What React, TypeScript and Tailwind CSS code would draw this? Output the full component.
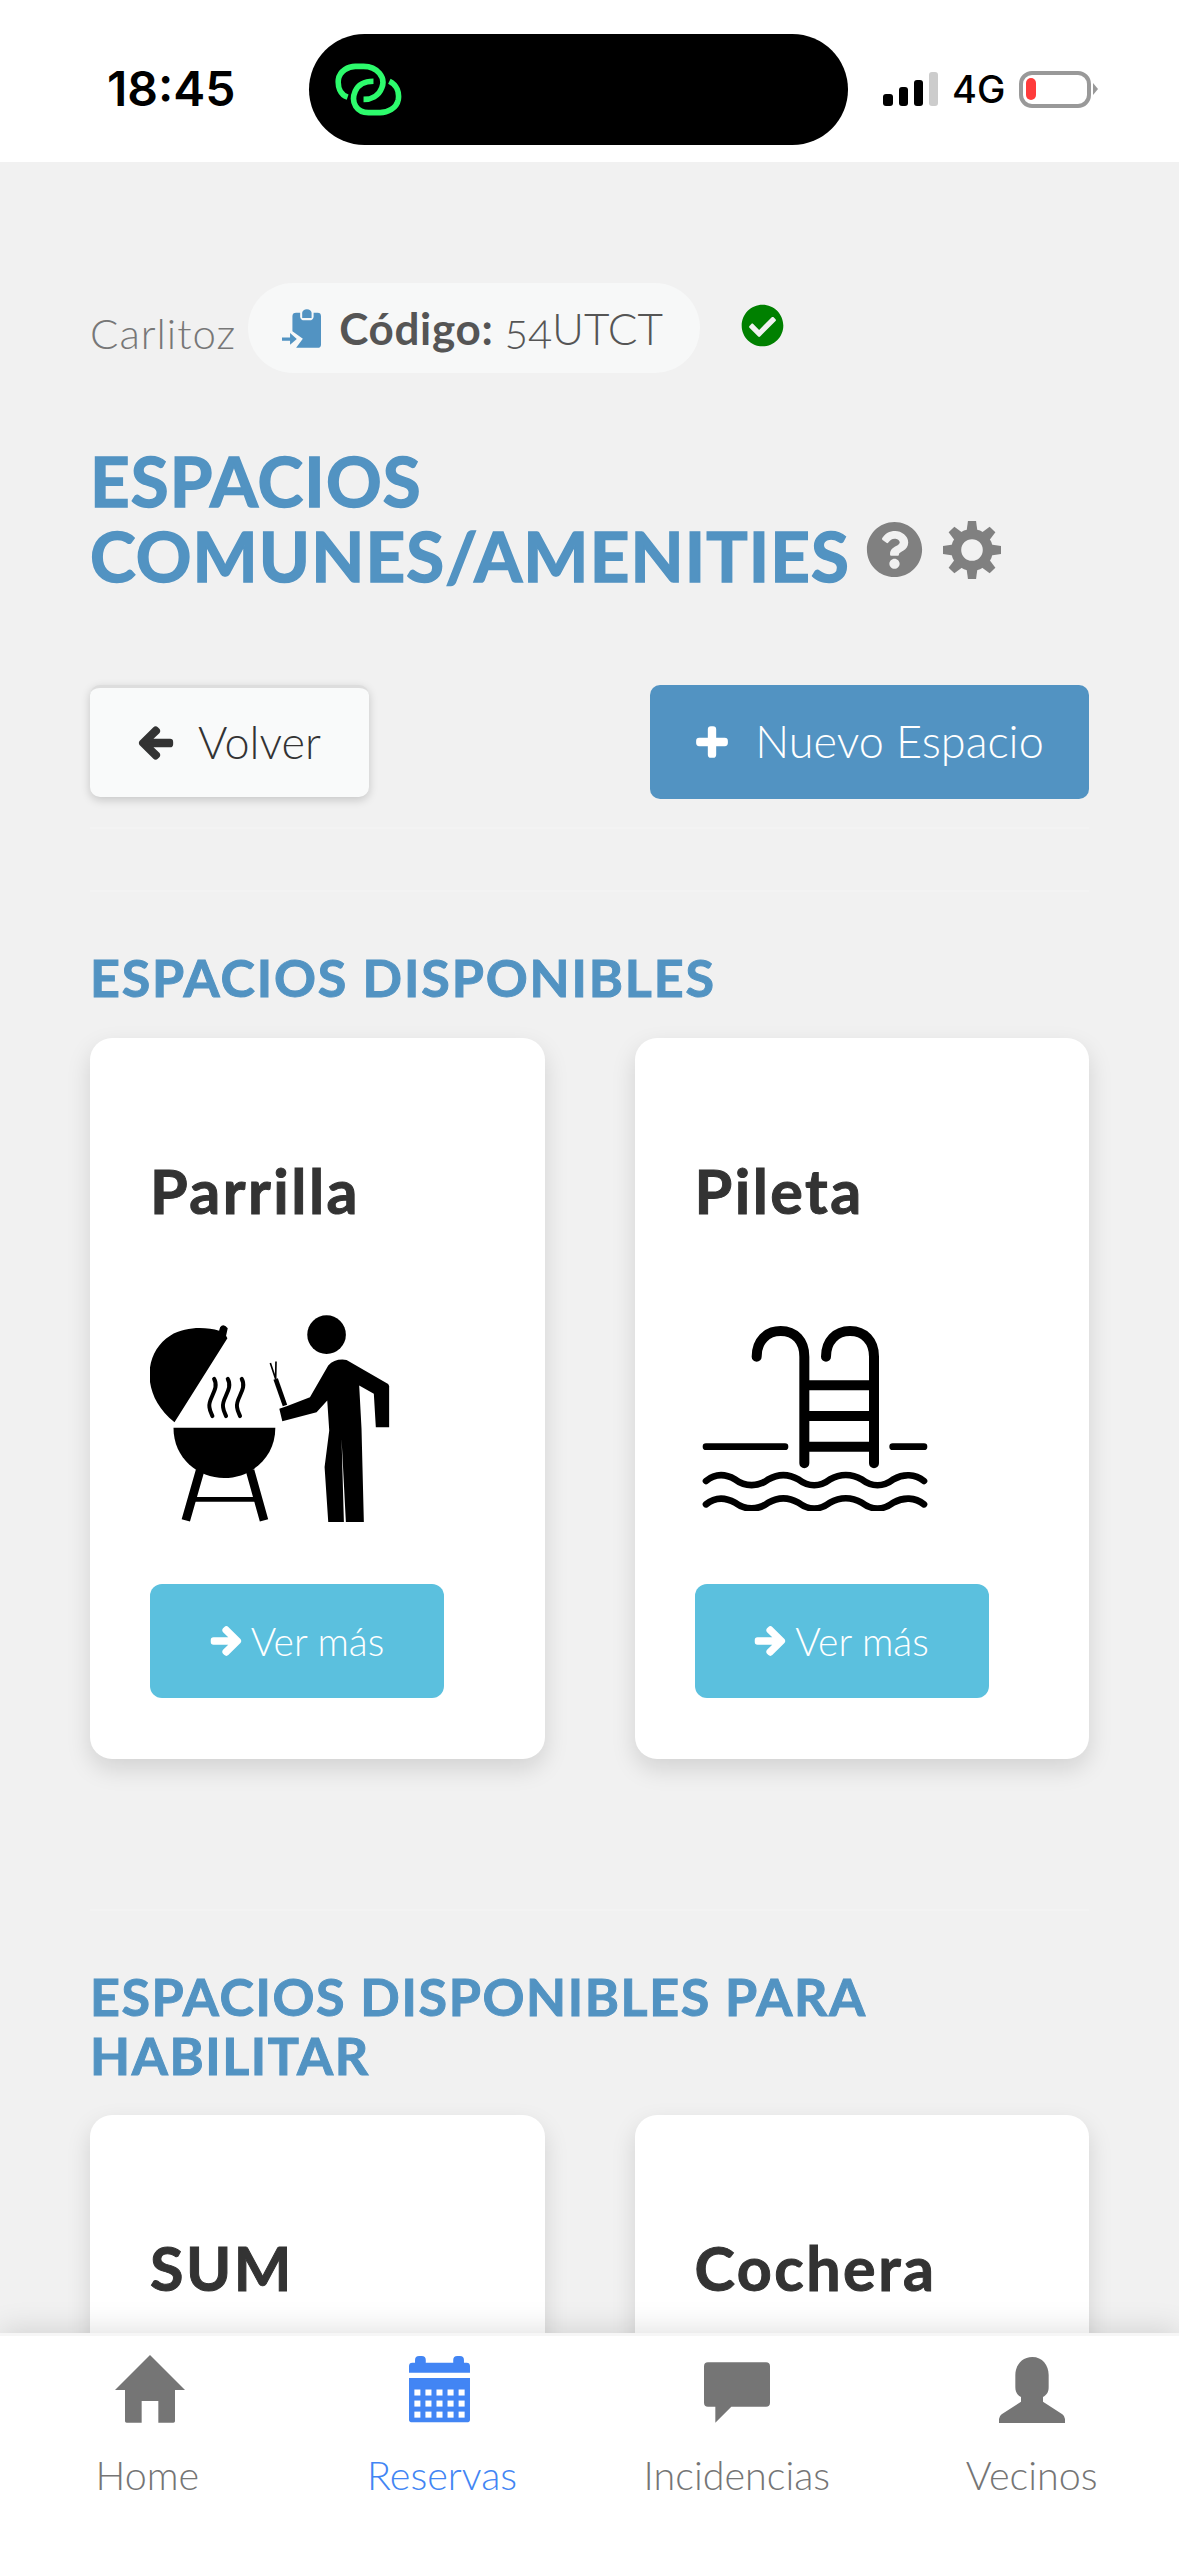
import React from "react";
import {
  FaArrowLeft,
  FaArrowRight,
  FaCheckCircle,
  FaPlus,
  FaQuestionCircle,
} from "react-icons/fa";

const GrillIcon = () => (
  <svg width={240} height={207} viewBox="90 108 720 622" fill="#000">
    <path d="M163 430C60 350 70 220 150 170C200 140 260 145 297 155L300 145Q310 132 323 148L318 170L322 178Z" />
    <path d="M160 447H466C466 540 390 598 312 598C235 598 160 540 160 447Z" />
    <path d="M240 575L197 725M390 575L432 725" stroke="#000" strokeWidth={26} />
    <path d="M222 662H408" stroke="#000" strokeWidth={14} />
    {[0, 41, 83].map((x) => (
      <path
        key={x}
        transform={`translate(${x} 0)`}
        d="M282 300C300 330 262 360 268 385C270 400 275 405 277 412"
        fill="none"
        stroke="#000"
        strokeWidth={12}
        strokeLinecap="round"
      />
    ))}
    <circle cx={620} cy={167} r={58} />
    <path d="M478 390L500 382L570 355L625 260Q645 238 680 243L805 315Q810 320 808 330V445H768L762 345L718 320L725 450L732 730H678L665 480L672 730H625L614 565L628 455L622 365L590 400L487 427Z" />
    <path d="M495 380L467 300" stroke="#000" strokeWidth={14} />
    <path d="M467 300L451 252M467 300L468 248" stroke="#000" strokeWidth={5} fill="none" />
  </svg>
);

const PoolIcon = () => (
  <svg width={226} height={185} viewBox="97 105 676 555" fill="none" stroke="#000" strokeLinecap="round">
    <path
      strokeWidth={30}
      d="M260 197C260 150 290 120 332 120C375 120 403 150 403 197V517M468 197C468 150 498 120 540 120C583 120 612 150 612 197V517"
    />
    <path strokeWidth={30} strokeLinecap="butt" d="M403 283H612M403 375H612M403 467H612" />
    <path strokeWidth={20} d="M108 467H345M668 467H762" />
    {[0, 70].map((y) => (
      <path
        key={y}
        transform={`translate(0 ${y})`}
        strokeWidth={20}
        d="M108 570C135 548 165 548 195 565C225 588 265 588 295 565C325 548 355 548 385 565C415 588 450 588 480 565C510 548 545 548 575 565C605 588 640 588 670 565C700 548 735 548 762 570"
      />
    ))}
  </svg>
);

const GearIcon = () => (
  <svg width={58} height={58} viewBox="0 0 172 172" fill="#808080">
    <circle cx={86} cy={86} r={47} fill="none" stroke="#808080" strokeWidth={30} />
    {[0, 45, 90, 135, 180, 225, 270, 315].map((a) => (
      <path key={a} transform={`rotate(${a} 86 86)`} d="M70 30L74 0H98L102 30Z" />
    ))}
  </svg>
);

const LinkLogo = () => (
  <svg width={67} height={53} viewBox="105 95 200 160" fill="none" stroke="#2dfb6c" strokeWidth={17}>
    <path d="M142 198C118 190 112 165 114 145C118 118 145 105 165 105H190C232 105 258 140 245 170C236 195 212 205 190 205" />
    <path d="M268 150C292 162 298 185 295 205C290 232 262 245 240 245H205C170 245 150 215 165 180C175 157 195 150 220 150" />
  </svg>
);

const ClipboardIcon = () => (
  <svg width={39} height={39} viewBox="66 92 116 115" fill="#5293c2" className="shrink-0">
    <path d="M108 103H120V115Q122 125 132 125H148Q158 125 160 115V103H172Q182 103 182 113V197Q182 207 172 207H108L128 180L97 158V113Q97 103 108 103Z" />
    <path d="M126 103Q128 92 140 92Q152 92 154 103V118H126Z" />
    <path d="M66 176H90V163L110 181L90 198V186H66Z" />
  </svg>
);

const HomeIcon = () => (
  <svg width={70} height={68} viewBox="75 45 210 204" fill="#757575" className="ml-[6px]">
    <path d="M180 45L285 150H255V244Q255 248 250 248H205V183H155V248H110Q105 248 105 244V150H75Z" />
  </svg>
);

const CalendarIcon = () => (
  <svg width={61} height={67} viewBox="0 0 182 200" fill="#4285f4" className="mr-[5px]">
    <path d="M0 50V30Q0 20 10 20H18V12Q18 0 30 0H38Q50 0 50 12V20H132V12Q132 0 144 0H152Q164 0 164 12V20H172Q182 20 182 30V50Z" />
    <path d="M0 66H182V190Q182 198 172 198H10Q0 198 0 190Z" />
    {[100, 133, 166].map((y) =>
      [16, 49, 82, 115, 148].map((x) => (
        <rect key={`${x}-${y}`} x={x} y={y} width={18} height={18} fill="#fff" />
      )),
    )}
  </svg>
);

const ChatIcon = () => (
  <svg width={66} height={61} viewBox="0 0 198 182" fill="#757575">
    <path d="M12 0H186Q198 0 198 12V122Q198 134 186 134H82L34 182V134H12Q0 134 0 122V12Q0 0 12 0Z" />
  </svg>
);

const UserIcon = () => (
  <svg width={66} height={66} viewBox="0 0 198 198" fill="#757575">
    <path d="M100 0C130 0 149 24 149 54V90C149 106 143 114 132 120V134L190 172Q198 178 198 186V198H0V186Q0 178 8 172L66 134V120C55 114 49 106 49 90V54C49 24 70 0 100 0Z" />
  </svg>
);

const SpaceCard = ({
  title,
  icon,
}: {
  title: string;
  icon?: React.ReactNode;
}) => (
  <div className="h-[721px] rounded-[22px] bg-white pl-[60px] pt-[117px] shadow-[0_10px_24px_rgba(0,0,0,0.13)]">
    <h3 className="text-[61px] leading-[72px] font-bold tracking-[2.5px] text-[#333] [-webkit-text-stroke:1px_#333]">
      {title}
    </h3>
    {icon && (
      <>
        <div className="mt-[76px] flex h-[230px] w-[240px] items-center justify-center">
          {icon}
        </div>
        <button className="mt-[51px] flex h-[114px] w-[294px] items-center justify-center gap-[9px] rounded-[12px] bg-[#5bc0de] text-[39px] font-light text-white">
          <FaArrowRight className="h-[32px] w-[32px]" stroke="currentColor" strokeWidth={40} />
          Ver más
        </button>
      </>
    )}
  </div>
);

const NavItem = ({
  icon,
  label,
  active,
}: {
  icon: React.ReactNode;
  label: string;
  active?: boolean;
}) => (
  <div className="flex flex-col items-center">
    <div className="flex h-[68px] items-end">{icon}</div>
    <span
      className={`mt-[30px] text-[39.5px] leading-[44px] font-light ${
        active ? "text-[#4285f4]" : "text-[#757575]"
      }`}
    >
      {label}
    </span>
  </div>
);

const App = () => {
  return (
    <div className="flex h-[2556px] w-[1179px] flex-col overflow-hidden bg-[#f1f1f1] font-['Lato',sans-serif]">
      {/* status bar */}
      <div className="flex h-[162px] shrink-0 items-center bg-white pt-[16px] font-['Inter',sans-serif]">
        <span className="ml-[107px] w-[202px] text-[48px] font-semibold text-black">
          18:45
        </span>
        <div className="flex h-[111px] w-[539px] items-center rounded-[56px] bg-black pl-[26px]">
          <LinkLogo />
        </div>
        <div className="ml-[35px] flex h-[34px] items-end gap-[6px]">
          <div className="h-[12px] w-[10px] rounded-[3px] bg-black" />
          <div className="h-[19px] w-[9px] rounded-[3px] bg-black" />
          <div className="h-[26px] w-[9px] rounded-[3px] bg-black" />
          <div className="h-[34px] w-[9px] rounded-[3px] bg-[#ccc]" />
        </div>
        <span className="ml-[14px] text-[38px] font-medium text-black">4G</span>
        <div className="ml-[14px] flex h-[37px] w-[72px] items-center rounded-[13px] border-[4px] border-[#999] pl-[3px]">
          <div className="h-[22px] w-[10px] rounded-[5px] bg-[#ff3b3b]" />
        </div>
        <div className="ml-[2px] h-0 w-0 border-y-[6px] border-l-[5px] border-y-transparent border-l-[#999]" />
      </div>

      {/* content */}
      <div className="min-h-0 flex-1 overflow-hidden px-[90px] pt-[121px]">
        <div className="flex h-[90px] items-center">
          <span className="mt-[10px] text-[42px] font-light tracking-[1px] text-[#777]">
            Carlitoz
          </span>
          <div className="ml-[12px] flex h-[90px] w-[452px] shrink-0 items-center rounded-full bg-[#f7f8f8] pl-[34px]">
            <ClipboardIcon />
            <span className="ml-[18px] text-[44px] font-bold tracking-[0.7px] text-[#555]">
              Código:
            </span>
            <span className="ml-[11px] text-[44px] font-light text-[#555] [font-variant-numeric:oldstyle-nums]">
              54UTCT
            </span>
          </div>
          <FaCheckCircle className="ml-[41px] h-[43px] w-[43px] -translate-y-[3px] text-[#008000]" />
        </div>

        <h1 className="mt-[70px] text-[69px] leading-[75px] font-bold tracking-[1.1px] text-[#5293c2] [-webkit-text-stroke:1.5px_#5293c2]">
          ESPACIOS
          <br />
          COMUNES/AMENITIES
        </h1>
        <div className="-mt-[72px] ml-[776px] flex gap-[20px]">
          <FaQuestionCircle className="h-[57px] w-[57px] text-[#808080]" />
          <GearIcon />
        </div>

        <div className="mt-[106px] flex items-start justify-between">
          <button className="flex h-[112px] w-[279px] items-center justify-center gap-[24px] rounded-[10px] border-t-[3px] border-[#ddd] bg-[#f9fafa] text-[45px] font-light text-[#333] shadow-[0_3px_10px_rgba(0,0,0,0.18)]">
            <FaArrowLeft className="h-[36px] w-[36px]" stroke="currentColor" strokeWidth={40} />
            Volver
          </button>
          <button className="flex h-[114px] w-[439px] items-center justify-center gap-[26px] rounded-[10px] bg-[#5293c2] text-[45px] font-light text-white">
            <FaPlus className="h-[34px] w-[34px]" stroke="currentColor" strokeWidth={30} />
            Nuevo Espacio
          </button>
        </div>

        <hr className="mt-[28px] border-t-[2px] border-[#f3f3f3]" />
        <hr className="mt-[61px] border-t-[2px] border-[#f3f3f3]" />

        <h2 className="mt-[56px] text-[52px] leading-[59px] font-bold tracking-[1.85px] text-[#5293c2] [-webkit-text-stroke:1px_#5293c2]">
          ESPACIOS DISPONIBLES
        </h2>
        <div className="mt-[31px] grid grid-cols-2 gap-[90px]">
          <SpaceCard title="Parrilla" icon={<GrillIcon />} />
          <SpaceCard title="Pileta" icon={<PoolIcon />} />
        </div>

        <hr className="mt-[150px] border-t-[2px] border-[#f3f3f3]" />

        <h2 className="mt-[56px] text-[52px] leading-[59px] font-bold tracking-[1.6px] text-[#5293c2] [-webkit-text-stroke:1px_#5293c2]">
          ESPACIOS DISPONIBLES PARA
          <br />
          HABILITAR
        </h2>
        <div className="mt-[30px] grid grid-cols-2 gap-[90px]">
          <SpaceCard title="SUM" />
          <SpaceCard title="Cochera" />
        </div>
      </div>

      {/* bottom tabs */}
      <div className="z-10 grid h-[223px] shrink-0 grid-cols-4 border-t-[3px] border-[#f6f6f6] bg-white pt-[19px] shadow-[0_-4px_28px_rgba(0,0,0,0.12)]">
        <NavItem icon={<HomeIcon />} label="Home" />
        <NavItem icon={<CalendarIcon />} label="Reservas" active />
        <NavItem icon={<ChatIcon />} label="Incidencias" />
        <NavItem icon={<UserIcon />} label="Vecinos" />
      </div>
    </div>
  );
};

export default App;
